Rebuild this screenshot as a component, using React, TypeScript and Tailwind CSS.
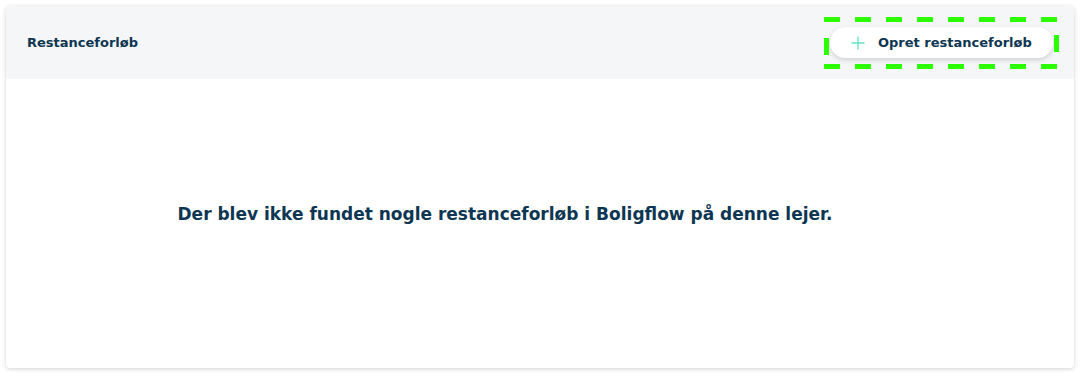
import * as React from "react";

function PlusIcon() {
    return (
        <svg width="14" height="14" viewBox="0 0 14 14" fill="none">
            <path d="M7 0.5V13.5M0.5 7H13.5" stroke="#5fe3c4" strokeWidth="1.3" />
        </svg>
    );
}

function FocusOutline() {
    // dashed highlight drawn around the button
    const top = [0, 31, 62, 93, 124, 155, 186, 217];
    return (
        <svg
            className="pointer-events-none absolute left-[-6px] top-[-10px]"
            width="235"
            height="52"
            viewBox="0 0 235 52"
        >
            {top.map((x) => (
                <React.Fragment key={x}>
                    <rect x={x} y="0" width="16" height="5" fill="#2cff00" />
                    <rect x={x} y="47" width="16" height="5" fill="#2cff00" />
                </React.Fragment>
            ))}
            <rect x="0" y="21" width="5" height="17" fill="#2cff00" />
            <rect x="230" y="18" width="5" height="17" fill="#2cff00" />
        </svg>
    );
}

export default function App() {
    return (
        <div className="min-h-[376px] bg-white p-[6px] pb-2 font-['DejaVu_Sans',sans-serif] text-[#0e3652]">
            <div className="overflow-hidden rounded-[4px] bg-white shadow-[0_1px_4px_rgba(0,0,0,0.18)]">
                <div className="flex h-[73px] items-center justify-between bg-[#f4f6f8] pl-[21px] pr-[21px]">
                    <h2 className="text-[13px] font-bold">Restanceforløb</h2>
                    <div className="relative">
                        <button className="flex h-[31px] w-[223px] items-center gap-[13px] rounded-full bg-white pl-[21px] text-[13px] font-bold text-[#0e3652] shadow-[0_2px_5px_rgba(0,0,0,0.16)]">
                            <PlusIcon />
                            Opret restanceforløb
                        </button>
                        <FocusOutline />
                    </div>
                </div>
                <div className="flex h-[289px] items-center justify-center pb-[17px] pr-[70px]">
                    <p className="text-[17px] font-bold">
                        Der blev ikke fundet nogle restanceforløb i Boligflow på denne lejer.
                    </p>
                </div>
            </div>
        </div>
    );
}
